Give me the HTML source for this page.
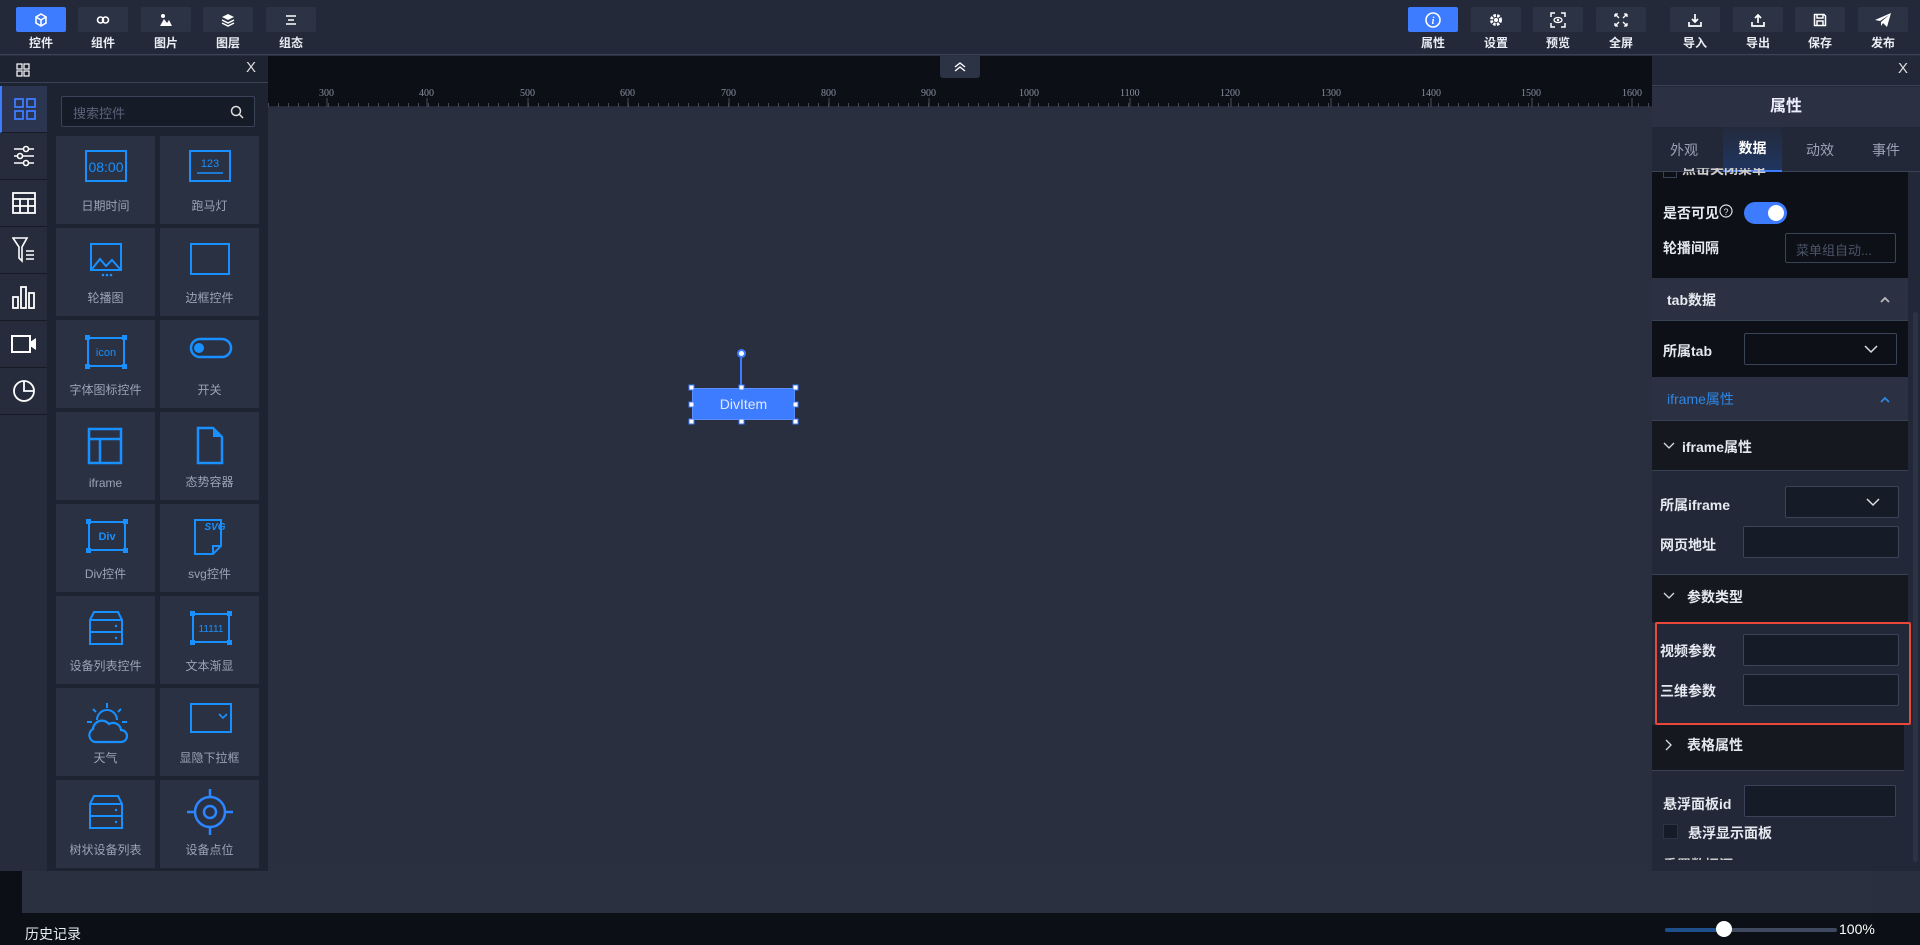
<!DOCTYPE html>
<html><head><meta charset="utf-8">
<style>
*{box-sizing:border-box;margin:0;padding:0}
body{width:1920px;height:945px;overflow:hidden;background:#292f3f;font-family:"Liberation Sans","Noto Sans CJK SC",sans-serif;color:#fff;position:relative}
.a{position:absolute}
.top{left:0;top:0;width:1920px;height:55px;background:#232938;border-bottom:1px solid #3a4256}
.tb{position:absolute;top:7px;width:50px;height:25px;background:#2c3344;border-radius:2px;display:flex;align-items:center;justify-content:center}
.tb.on{background:#3d7bff}
.tl{position:absolute;top:34px;width:50px;text-align:center;font-size:12px;font-weight:bold;color:#e8ecf3}
.lp{left:0;top:56px;width:268px;height:815px;background:#1e2331}
.ic{position:absolute;left:0;width:47px;height:47px;border-bottom:1px solid #161a24;display:flex;align-items:center;justify-content:center;background:#262c3b}
.cell{position:absolute;width:99px;height:88px;background:#2a3142;text-align:center}
.cell span{position:absolute;left:0;right:0;bottom:10px;font-size:12px;color:#9aa3b5}
.cell svg{position:absolute;left:29px;top:14px}
.rp{left:1652px;top:56px;width:268px;height:815px;background:#222838}
.lbl{position:absolute;font-size:14px;font-weight:bold;color:#e6e9ef}
.inp{position:absolute;background:#161b28;border:1px solid #3a4358;border-radius:2px}
.sec{position:absolute;left:0;width:256px}
</style></head><body>
<!-- top bar -->
<div class="a top">
<div class="tb on" style="left:16px"><svg width="14" height="14" viewBox="0 0 14 14"><path d="M7 1L12 4V10L7 13L2 10V4Z M2 4L7 7L12 4 M7 7V13" fill="none" stroke="#fff" stroke-width="1.6"/></svg></div><div class="tl" style="left:16px">控件</div>
<div class="tb" style="left:78px"><svg width="14" height="10"><circle cx="4.5" cy="5" r="3" fill="none" stroke="#fff" stroke-width="1.6"/><circle cx="9.5" cy="5" r="3" fill="none" stroke="#fff" stroke-width="1.6"/></svg></div><div class="tl" style="left:78px">组件</div>
<div class="tb" style="left:141px"><svg width="14" height="14"><circle cx="4" cy="3" r="2" fill="#fff"/><path d="M1 13L5 6L8 10L10 7L13 13Z" fill="#fff"/></svg></div><div class="tl" style="left:141px">图片</div>
<div class="tb" style="left:203px"><svg width="14" height="14"><path d="M7 1L13 4L7 7L1 4Z" fill="#fff"/><path d="M1 7L7 10L13 7M1 10L7 13L13 10" fill="none" stroke="#fff" stroke-width="1.5"/></svg></div><div class="tl" style="left:203px">图层</div>
<div class="tb" style="left:266px"><svg width="12" height="10"><path d="M1 1H11M3 5H9M1 9H11" stroke="#fff" stroke-width="1.5"/></svg></div><div class="tl" style="left:266px">组态</div>

<div class="tb on" style="left:1408px"><svg width="16" height="16"><circle cx="8" cy="8" r="7" fill="none" stroke="#fff" stroke-width="1.6"/><text x="8" y="12" font-size="10" font-style="italic" font-weight="bold" text-anchor="middle" fill="#fff" font-family="Liberation Serif">i</text></svg></div><div class="tl" style="left:1408px">属性</div>
<div class="tb" style="left:1471px"><svg width="14" height="14"><circle cx="7" cy="7" r="4.5" fill="none" stroke="#fff" stroke-width="3" stroke-dasharray="2.5 1.2"/><circle cx="7" cy="7" r="2" fill="#fff"/></svg></div><div class="tl" style="left:1471px">设置</div>
<div class="tb" style="left:1533px"><svg width="16" height="16"><path d="M1 5V1H5M11 1H15V5M15 11V15H11M5 15H1V11" fill="none" stroke="#fff" stroke-width="1.5"/><ellipse cx="8" cy="8" rx="4" ry="2.5" fill="none" stroke="#fff" stroke-width="1.3"/><circle cx="8" cy="8" r="1.2" fill="#fff"/></svg></div><div class="tl" style="left:1533px">预览</div>
<div class="tb" style="left:1596px"><svg width="14" height="14"><path d="M1 1L5 5M1 1H4M1 1V4M13 1L9 5M13 1H10M13 1V4M1 13L5 9M1 13H4M1 13V10M13 13L9 9M13 13H10M13 13V10" fill="none" stroke="#fff" stroke-width="1.3"/></svg></div><div class="tl" style="left:1596px">全屏</div>
<div class="tb" style="left:1670px"><svg width="14" height="14"><path d="M7 1V9M4 6L7 9L10 6M1 9V13H13V9" fill="none" stroke="#fff" stroke-width="1.7"/></svg></div><div class="tl" style="left:1670px">导入</div>
<div class="tb" style="left:1733px"><svg width="14" height="14"><path d="M7 10V2M4 5L7 2L10 5M1 9V13H13V9" fill="none" stroke="#fff" stroke-width="1.7"/></svg></div><div class="tl" style="left:1733px">导出</div>
<div class="tb" style="left:1795px"><svg width="14" height="14"><path d="M1.5 1.5H11L12.5 3V12.5H1.5Z M4 1.5V5H10V1.5 M4 12.5V8H10V12.5" fill="none" stroke="#fff" stroke-width="1.5"/></svg></div><div class="tl" style="left:1795px">保存</div>
<div class="tb" style="left:1858px"><svg width="18" height="16"><path d="M1 8L17 1L13 15L9 11L7 14V10L15 3L6 9Z" fill="#fff"/></svg></div><div class="tl" style="left:1858px">发布</div>
</div>

<!-- ruler -->
<div class="a" style="left:268px;top:56px;width:1384px;height:51px;background:#0c0f16"></div>
<svg class="a" style="left:268px;top:83px" width="1384" height="24">
<g fill="#8a90a0" font-size="10" font-family="Liberation Serif">
<text x="51" y="13">300</text><text x="151" y="13">400</text><text x="252" y="13">500</text><text x="352" y="13">600</text><text x="453" y="13">700</text><text x="553" y="13">800</text><text x="653" y="13">900</text><text x="751" y="13">1000</text><text x="852" y="13">1100</text><text x="952" y="13">1200</text><text x="1053" y="13">1300</text><text x="1153" y="13">1400</text><text x="1253" y="13">1500</text><text x="1354" y="13">1600</text>
</g>
<path d="M0 24H1384" stroke="#3a3f4d" stroke-width="1"/>
<g stroke="#4a505e" stroke-width="1">
<path d="M59 15V24M159 15V24M260 15V24M360 15V24M461 15V24M561 15V24M661 15V24M762 15V24M862 15V24M963 15V24M1063 15V24M1163 15V24M1264 15V24M1364 15V24" />
</g>
<path d="M9 20V24" stroke="#3a3f4d" stroke-dasharray="1 9.04" stroke-width="1400" opacity="0"/>
</svg>
<div class="a" style="left:268px;top:103px;width:1384px;height:4px;background:repeating-linear-gradient(90deg,#444a58 0 1px,transparent 1px 10px)"></div>
<div class="a" style="left:940px;top:56px;width:40px;height:22px;background:#2c3344;border-radius:0 0 3px 3px;display:flex;align-items:center;justify-content:center"><svg width="12" height="10"><path d="M1 5L6 1L11 5M1 9L6 5L11 9" fill="none" stroke="#fff" stroke-width="1.4"/></svg></div>

<!-- DivItem -->
<div class="a" style="left:740px;top:358px;width:2px;height:30px;background:#3d7bff"></div>
<div class="a" style="left:737px;top:349px;width:9px;height:9px;border-radius:50%;background:#fff;border:2px solid #3d7bff"></div>
<div class="a" style="left:692px;top:388px;width:103px;height:32px;background:#3d7bff;border:1px solid #5a8fff;font-size:14px;color:#dfe8ff;display:flex;align-items:center;justify-content:center">DivItem</div>
<svg class="a" style="left:688px;top:384px" width="112" height="41"><g fill="#fff" stroke="#3d7bff" stroke-width="1"><rect x="1" y="1" width="5" height="5"/><rect x="51" y="1" width="5" height="5"/><rect x="105" y="1" width="5" height="5"/><rect x="1" y="18" width="5" height="5"/><rect x="105" y="18" width="5" height="5"/><rect x="1" y="35" width="5" height="5"/><rect x="51" y="35" width="5" height="5"/><rect x="105" y="35" width="5" height="5"/></g></svg>

<!-- bottom -->
<div class="a" style="left:22px;top:871px;width:1850px;height:42px;background:#2a3040"></div>
<div class="a" style="left:0;top:871px;width:22px;height:50px;background:#0c0f16"></div>
<div class="a" style="left:0;top:913px;width:1920px;height:8px;background:#0c0f16"></div>
<div class="a" style="left:0;top:921px;width:1920px;height:24px;background:#0c0f16"></div>
<div class="a" style="left:25px;top:924px;font-size:14px;color:#e8ecf3">历史记录</div>
<div class="a" style="left:1665px;top:928px;width:172px;height:4px;background:#3f4a60;border-radius:2px"></div>
<div class="a" style="left:1665px;top:928px;width:60px;height:4px;background:#1f4f8a;border-radius:2px"></div>
<div class="a" style="left:1716px;top:921px;width:16px;height:16px;border-radius:50%;background:#fff"></div>
<div class="a" style="left:1839px;top:921px;font-size:14px;color:#fff">100%</div>

<!-- left panel -->
<div class="a lp">
<div class="a" style="left:0;top:0;width:268px;height:27px;border-bottom:1px solid #3a4256;background:#1e2331"></div>
<svg class="a" style="left:16px;top:7px" width="14" height="14"><g fill="none" stroke="#fff" stroke-width="1.2"><rect x="1" y="1" width="5" height="5"/><rect x="8" y="1" width="5" height="5"/><rect x="1" y="8" width="5" height="5"/><rect x="8" y="8" width="5" height="5"/></g></svg>
<div class="a" style="left:246px;top:3px;font-size:15px;color:#ddd">X</div>
<div class="ic" style="top:30px;background:#2b3550;border-left:2px solid #3d7bff"><svg width="22" height="22"><g fill="none" stroke="#3d7bff" stroke-width="1.8"><rect x="1" y="1" width="8" height="8"/><rect x="13" y="1" width="8" height="8"/><rect x="1" y="13" width="8" height="8"/><rect x="13" y="13" width="8" height="8"/></g></svg></div>
<div class="ic" style="top:77px"><svg width="22" height="22"><g stroke="#fff" stroke-width="1.6" fill="#262c3b"><path d="M1 4H21M1 11H21M1 18H21"/><circle cx="13" cy="4" r="2.5"/><circle cx="7" cy="11" r="2.5"/><circle cx="13" cy="18" r="2.5"/></g></svg></div>
<div class="ic" style="top:124px"><svg width="24" height="22"><g fill="none" stroke="#fff" stroke-width="1.8"><rect x="1" y="1" width="22" height="20"/><path d="M1 7H23M1 14H23M8 7V21M16 7V21"/></g></svg></div>
<div class="ic" style="top:171px"><svg width="24" height="26"><path d="M1 1H15L10 10V24L7 21V10Z" fill="none" stroke="#fff" stroke-width="1.6"/><path d="M14 14H22M14 18H22M14 22H22" stroke="#fff" stroke-width="1.6"/></svg></div>
<div class="ic" style="top:218px"><svg width="24" height="24"><g fill="none" stroke="#fff" stroke-width="1.8"><rect x="1" y="12" width="5" height="11"/><rect x="9" y="2" width="5" height="21"/><rect x="17" y="8" width="5" height="15"/></g></svg></div>
<div class="ic" style="top:265px"><svg width="26" height="20"><rect x="1" y="2" width="18" height="16" fill="none" stroke="#fff" stroke-width="2"/><path d="M19 8L25 4V16L19 12" fill="#fff"/></svg></div>
<div class="ic" style="top:312px"><svg width="24" height="24"><circle cx="12" cy="12" r="10" fill="none" stroke="#fff" stroke-width="1.8"/><path d="M12 2V12H22" fill="none" stroke="#fff" stroke-width="1.8"/></svg></div>
<div class="a" style="left:0;top:359px;width:47px;height:456px;background:#262c3b"></div>

<div class="inp" style="left:61px;top:40px;width:194px;height:31px;background:#161b28"><span style="position:absolute;left:11px;top:6px;font-size:13px;color:#596278">搜索控件</span><svg style="position:absolute;right:10px;top:8px" width="14" height="14"><circle cx="6" cy="6" r="4.5" fill="none" stroke="#ddd" stroke-width="1.5"/><path d="M9 9L13 13" stroke="#ddd" stroke-width="1.5"/></svg></div>

<!-- cells -->
<div class="cell" style="left:56px;top:80px"><svg width="42" height="32"><rect x="1" y="1" width="40" height="30" fill="none" stroke="#1890ff" stroke-width="2"/><text x="21" y="22" font-size="14" text-anchor="middle" fill="#1890ff">08:00</text></svg><span>日期时间</span></div>
<div class="cell" style="left:160px;top:80px"><svg width="42" height="32"><rect x="1" y="1" width="40" height="30" fill="none" stroke="#1890ff" stroke-width="2"/><text x="21" y="17" font-size="11" text-anchor="middle" fill="#1890ff">123</text><path d="M8 23H34" stroke="#1890ff" stroke-width="1.5"/></svg><span>跑马灯</span></div>
<div class="cell" style="left:56px;top:172px"><svg width="42" height="36"><rect x="6" y="2" width="30" height="26" fill="none" stroke="#1890ff" stroke-width="2"/><path d="M7 27L15 17L21 24L27 18L35 27" fill="none" stroke="#1890ff" stroke-width="2"/><circle cx="18" cy="33" r="1.3" fill="#1890ff"/><circle cx="22" cy="33" r="1.3" fill="#1890ff"/><circle cx="26" cy="33" r="1.3" fill="#1890ff"/></svg><span>轮播图</span></div>
<div class="cell" style="left:160px;top:172px"><svg width="42" height="34"><rect x="2" y="2" width="38" height="30" fill="none" stroke="#1890ff" stroke-width="2"/></svg><span>边框控件</span></div>
<div class="cell" style="left:56px;top:264px"><svg width="42" height="36"><rect x="3" y="4" width="36" height="28" fill="none" stroke="#1890ff" stroke-width="2"/><g fill="#1890ff"><rect x="0" y="1" width="5" height="5"/><rect x="37" y="1" width="5" height="5"/><rect x="0" y="30" width="5" height="5"/><rect x="37" y="30" width="5" height="5"/></g><text x="21" y="22" font-size="11" text-anchor="middle" fill="#1890ff">icon</text></svg><span>字体图标控件</span></div>
<div class="cell" style="left:160px;top:264px"><svg width="44" height="30"><rect x="2" y="5" width="40" height="18" rx="9" fill="none" stroke="#1890ff" stroke-width="2.5"/><circle cx="10" cy="14" r="5" fill="#1890ff"/></svg><span>开关</span></div>
<div class="cell" style="left:56px;top:356px"><svg width="42" height="40"><rect x="4" y="3" width="32" height="34" fill="none" stroke="#1890ff" stroke-width="2.5"/><path d="M4 13H36M15 13V37" stroke="#1890ff" stroke-width="2.5"/></svg><span>iframe</span></div>
<div class="cell" style="left:160px;top:356px"><svg width="42" height="40"><path d="M9 2H24L33 11V37H9Z" fill="none" stroke="#1890ff" stroke-width="2.5"/><path d="M24 2V11H33Z" fill="#1890ff"/></svg><span>态势容器</span></div>
<div class="cell" style="left:56px;top:448px"><svg width="44" height="36"><rect x="4" y="4" width="36" height="28" fill="none" stroke="#1890ff" stroke-width="2"/><g fill="#1890ff"><rect x="1" y="1" width="5" height="5"/><rect x="38" y="1" width="5" height="5"/><rect x="1" y="30" width="5" height="5"/><rect x="38" y="30" width="5" height="5"/></g><text x="22" y="22" font-size="11" font-weight="bold" text-anchor="middle" fill="#1890ff">Div</text></svg><span>Div控件</span></div>
<div class="cell" style="left:160px;top:448px"><svg width="42" height="40"><path d="M6 2H32V28L24 36H6Z" fill="none" stroke="#1890ff" stroke-width="2"/><path d="M24 36V28H32" fill="none" stroke="#1890ff" stroke-width="2"/><text x="26" y="12" font-size="10" font-style="italic" font-weight="bold" text-anchor="middle" fill="#1890ff">SVG</text></svg><span>svg控件</span></div>
<div class="cell" style="left:56px;top:540px"><svg width="42" height="36"><path d="M5 10L9 2H33L37 10V34H5Z M5 10H37M5 22H37" fill="none" stroke="#1890ff" stroke-width="2"/><circle cx="31" cy="16" r="1.2" fill="#1890ff"/><circle cx="31" cy="28" r="1.2" fill="#1890ff"/></svg><span>设备列表控件</span></div>
<div class="cell" style="left:160px;top:540px"><svg width="44" height="36"><rect x="4" y="4" width="36" height="28" fill="none" stroke="#1890ff" stroke-width="2"/><g fill="#1890ff"><rect x="1" y="1" width="5" height="5"/><rect x="38" y="1" width="5" height="5"/><rect x="1" y="30" width="5" height="5"/><rect x="38" y="30" width="5" height="5"/></g><text x="22" y="22" font-size="10" text-anchor="middle" fill="#1890ff">11111</text></svg><span>文本渐显</span></div>
<div class="cell" style="left:56px;top:632px"><svg width="44" height="42"><path d="M22 1V6M8 7L11 10M36 7L33 10M2 20H7M42 20H37" stroke="#1890ff" stroke-width="2"/><path d="M12 18A10 10 0 0 1 32 18" fill="none" stroke="#1890ff" stroke-width="2"/><path d="M10 40A7 7 0 0 1 8 27A9 9 0 0 1 24 22A8 8 0 0 1 36 28A6 6 0 0 1 36 40Z" fill="none" stroke="#1890ff" stroke-width="2.2"/></svg><span>天气</span></div>
<div class="cell" style="left:160px;top:632px"><svg width="44" height="32"><rect x="2" y="2" width="40" height="28" fill="none" stroke="#1890ff" stroke-width="2"/><path d="M30 12L34 16L38 12" fill="none" stroke="#1890ff" stroke-width="1.6"/></svg><span>显隐下拉框</span></div>
<div class="cell" style="left:56px;top:724px"><svg width="42" height="36"><path d="M5 10L9 2H33L37 10V34H5Z M5 10H37M5 22H37" fill="none" stroke="#1890ff" stroke-width="2"/><circle cx="31" cy="16" r="1.2" fill="#1890ff"/><circle cx="31" cy="28" r="1.2" fill="#1890ff"/></svg><span>树状设备列表</span></div>
<div class="cell" style="left:160px;top:724px"><svg width="48" height="48" style="left:26px;top:8px"><circle cx="24" cy="24" r="15" fill="none" stroke="#2d86ff" stroke-width="2.5"/><circle cx="24" cy="24" r="6" fill="none" stroke="#2d86ff" stroke-width="2.5"/><path d="M24 1V9M24 39V47M1 24H9M39 24H47" stroke="#2d86ff" stroke-width="2.5"/></svg><span>设备点位</span></div>
</div>

<!-- right panel -->
<div class="a rp">
<div class="a" style="left:0;top:0;width:268px;height:30px;border-bottom:1px solid #3a4256;background:#222838"></div>
<div class="a" style="left:246px;top:4px;font-size:15px;color:#ddd">X</div>
<div class="a" style="left:0;top:31px;width:268px;height:40px;background:#2b3142;text-align:center;font-size:16px;font-weight:bold;line-height:40px;color:#eef">属性</div>
<div class="a" style="left:0;top:71px;width:268px;height:45px;background:#222838;border-bottom:1px solid #3a4256"></div>
<div class="a" style="left:18px;top:84px;font-size:14px;color:#9aa3b5">外观</div>
<div class="a" style="left:71px;top:71px;width:59px;height:45px;background:linear-gradient(#232a3c,#1f3560);border-bottom:2px solid #3d7bff;text-align:center;line-height:43px;font-size:14px;font-weight:bold;color:#fff">数据</div>
<div class="a" style="left:154px;top:84px;font-size:14px;color:#9aa3b5">动效</div>
<div class="a" style="left:220px;top:84px;font-size:14px;color:#9aa3b5">事件</div>

<div class="sec" style="top:116px;height:106px;background:#0d1016"></div>
<div class="a" style="left:11px;top:116px;width:14px;height:6px;border:1px solid #3a4358;border-top:none"></div>
<div class="a" style="left:30px;top:112px;font-size:14px;font-weight:bold;color:#ccc;height:10px;overflow:hidden;line-height:2px">点击关闭菜单</div>
<div class="lbl" style="left:11px;top:147px">是否可见</div>
<svg class="a" style="left:67px;top:148px" width="14" height="14"><circle cx="7" cy="7" r="6" fill="none" stroke="#ddd" stroke-width="1.2"/><text x="7" y="11" font-size="9" text-anchor="middle" fill="#ddd">?</text></svg>
<div class="a" style="left:92px;top:146px;width:43px;height:22px;border-radius:11px;background:#3d7bff"><div style="position:absolute;right:3px;top:3px;width:16px;height:16px;border-radius:50%;background:#fff"></div></div>
<div class="lbl" style="left:11px;top:182px">轮播间隔</div>
<div class="inp" style="left:133px;top:177px;width:111px;height:30px;background:#0d1016"><span style="position:absolute;left:10px;top:6px;font-size:13px;color:#4c5468">菜单组自动...</span></div>

<div class="sec" style="top:222px;height:43px;background:#2b3142;border-bottom:1px solid #3a4256"></div>
<div class="lbl" style="left:15px;top:234px">tab数据</div>
<svg class="a" style="left:228px;top:240px" width="10" height="7"><path d="M1 6L5 2L9 6" fill="none" stroke="#bbb" stroke-width="1.8"/></svg>
<div class="sec" style="top:265px;height:56px;background:#0d1016"></div>
<div class="lbl" style="left:11px;top:285px">所属tab</div>
<div class="inp" style="left:92px;top:277px;width:153px;height:32px;background:#0d1016"><svg style="position:absolute;right:18px;top:11px" width="14" height="9"><path d="M1 1L7 7L13 1" fill="none" stroke="#ddd" stroke-width="1.5"/></svg></div>

<div class="sec" style="top:321px;height:44px;background:#2b3142;border-bottom:1px solid #3a4256"></div>
<div class="a" style="left:15px;top:333px;font-size:14px;color:#2d86e6">iframe属性</div>
<svg class="a" style="left:228px;top:340px" width="10" height="7"><path d="M1 6L5 2L9 6" fill="none" stroke="#2d86e6" stroke-width="1.8"/></svg>
<div class="sec" style="top:365px;height:50px;background:#15181f;border-bottom:1px solid #3a4256"></div>
<svg class="a" style="left:11px;top:386px" width="12" height="8"><path d="M1 1L6 6L11 1" fill="none" stroke="#ddd" stroke-width="1.3"/></svg>
<div class="lbl" style="left:30px;top:381px">iframe属性</div>

<div class="sec" style="top:415px;height:104px;background:#222838;border-bottom:1px solid #3a4256"></div>
<div class="lbl" style="left:8px;top:439px">所属iframe</div>
<div class="inp" style="left:133px;top:430px;width:114px;height:32px"><svg style="position:absolute;right:18px;top:11px" width="14" height="9"><path d="M1 1L7 7L13 1" fill="none" stroke="#ddd" stroke-width="1.5"/></svg></div>
<div class="lbl" style="left:8px;top:479px">网页地址</div>
<div class="inp" style="left:91px;top:470px;width:156px;height:32px"></div>

<div class="sec" style="top:519px;height:47px;background:#15181f"></div>
<svg class="a" style="left:11px;top:536px" width="12" height="8"><path d="M1 1L6 6L11 1" fill="none" stroke="#ddd" stroke-width="1.3"/></svg>
<div class="lbl" style="left:35px;top:531px">参数类型</div>

<div class="sec" style="top:566px;height:103px;background:#222838"></div>
<div class="a" style="left:3px;top:566px;width:256px;height:103px;border:2px solid #e8473a;border-radius:2px"></div>
<div class="lbl" style="left:8px;top:585px">视频参数</div>
<div class="inp" style="left:91px;top:578px;width:156px;height:32px"></div>
<div class="lbl" style="left:8px;top:625px">三维参数</div>
<div class="inp" style="left:91px;top:618px;width:156px;height:32px"></div>

<div class="sec" style="top:669px;height:46px;width:252px;background:#15181f;border-bottom:1px solid #3a4256"></div>
<svg class="a" style="left:13px;top:683px" width="8" height="12"><path d="M1 1L6 6L1 11" fill="none" stroke="#ddd" stroke-width="1.3"/></svg>
<div class="lbl" style="left:35px;top:679px">表格属性</div>
<div class="lbl" style="left:11px;top:738px">悬浮面板id</div>
<div class="inp" style="left:92px;top:729px;width:152px;height:32px"></div>
<div class="a" style="left:11px;top:768px;width:15px;height:15px;background:#161b28;border:1px solid #2c3344"></div>
<div class="lbl" style="left:36px;top:767px">悬浮显示面板</div>
<div class="a" style="left:11px;top:798px;font-size:14px;font-weight:bold;color:#ccc;height:6px;overflow:hidden;line-height:22px">重置数据源</div>
<div class="a" style="left:261px;top:256px;width:5px;height:550px;background:#2c3344;border-radius:3px"></div>
</div>
</body></html>
